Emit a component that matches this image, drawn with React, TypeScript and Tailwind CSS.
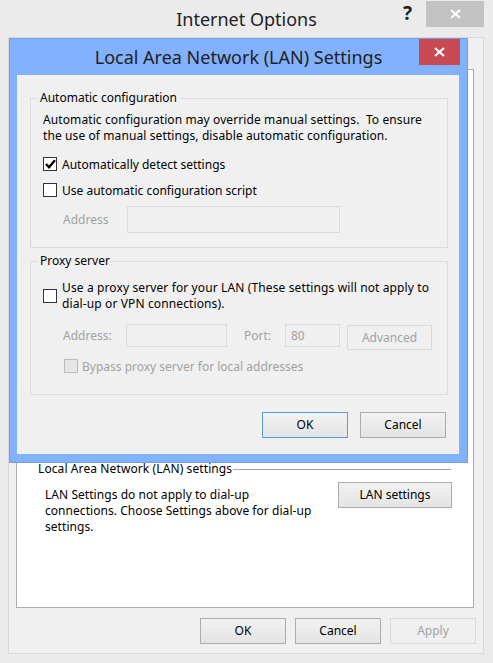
import type { ReactNode } from 'react'

const FONT = "font-['Segoe_UI','Noto_Sans',sans-serif]"

function CheckBox({ checked = false, disabled = false }: { checked?: boolean; disabled?: boolean }) {
  return (
    <div
      className={`-mt-[2px] flex h-[14px] w-[14px] shrink-0 items-center justify-center border ${
        disabled ? 'border-[#bcbcbc] bg-[#e6e6e6]' : 'border-[#333333] bg-white'
      }`}
    >
      {checked && (
        <svg width="11" height="10" viewBox="0 0 11 10">
          <path d="M1 5 L4 8.2 L10 1.2" fill="none" stroke="#000" strokeWidth="2.4" />
        </svg>
      )}
    </div>
  )
}

function Button({
  children,
  width,
  disabled = false,
  primary = false
}: {
  children: ReactNode
  width: string
  disabled?: boolean
  primary?: boolean
}) {
  const border = primary ? 'border-[#5b9be6]' : disabled ? 'border-[#d9d9d9]' : 'border-[#acacac]'
  const bg = disabled ? 'bg-[#f0f0f0]' : 'bg-gradient-to-b from-[#f2f2f2] to-[#e4e4e4]'
  return (
    <div
      className={`flex h-[26px] items-center justify-center border ${border} ${bg} ${width} ${
        disabled ? 'text-[#a2a2a2]' : 'text-black'
      }`}
    >
      {children}
    </div>
  )
}

function GroupBox({ label, children, className }: { label: string; children: ReactNode; className: string }) {
  return (
    <div className={`relative border border-[#dcdcdc] ${className}`}>
      <span className="absolute -top-[9px] left-[7px] bg-[#f0f0f0] px-[2px] leading-[16px]">{label}</span>
      {children}
    </div>
  )
}

function LanDialog() {
  return (
    <div className="absolute left-[9px] top-[38px] flex h-[425px] w-[459px] flex-col border border-[#6f9de6] bg-[#82b1fd]">
      <div className="relative flex h-[36px] items-center justify-center text-[18px] text-[#222222]">
        Local Area Network (LAN) Settings
        <div className="absolute right-[7px] top-0 flex h-[26px] w-[41px] items-center justify-center bg-[#c74a52]">
          <svg width="11" height="10" viewBox="0 0 11 10">
            <path d="M1 1 L10 9 M10 1 L1 9" stroke="#fff" strokeWidth="2" />
          </svg>
        </div>
      </div>

      <div className="ml-[7px] flex h-[379px] w-[442px] flex-col bg-[#f0f0f0] text-[12px] leading-[16px]">
        <GroupBox label="Automatic configuration" className="ml-[13px] mt-[23px] h-[150px] w-[418px] pl-[12px] pt-[13px]">
          <p className="leading-[16px] tracking-[0.1px]">Automatic configuration may override manual settings.&nbsp; To ensure</p>
          <p className="leading-[16px] tracking-[0.1px]">the use of manual settings, disable automatic configuration.</p>
          <div className="mt-[13px] flex h-[16px] items-center gap-[5px]">
            <CheckBox checked />
            <span>Automatically detect settings</span>
          </div>
          <div className="mt-[10px] flex h-[16px] items-center gap-[5px]">
            <CheckBox />
            <span>Use automatic configuration script</span>
          </div>
          <div className="mt-[7px] flex items-center">
            <span className="ml-[20px] w-[64px] text-[#a2a2a2]">Address</span>
            <div className="h-[27px] w-[213px] border border-[#dadada] bg-[#f0f0f0]" />
          </div>
        </GroupBox>

        <GroupBox label="Proxy server" className="ml-[13px] mt-[13px] h-[134px] w-[418px] pl-[12px] pt-[18px]">
          <div className="flex items-center gap-[5px]">
            <div className="mt-[2px]">
              <CheckBox />
            </div>
            <div className="tracking-[0.12px]">
              <p className="leading-[16px]">Use a proxy server for your LAN (These settings will not apply to</p>
              <p className="leading-[16px]">dial-up or VPN connections).</p>
            </div>
          </div>
          <div className="mt-[12px] flex items-start">
            <span className="ml-[20px] mt-[4px] w-[63px] text-[#a2a2a2]">Address:</span>
            <div className="h-[23px] w-[101px] border border-[#dadada] bg-[#f0f0f0]" />
            <span className="ml-[17px] mt-[4px] w-[41px] text-[#a2a2a2]">Port:</span>
            <div className="flex h-[23px] w-[55px] items-center border border-[#dadada] bg-[#f0f0f0] pl-[5px] text-[#a2a2a2]">
              80
            </div>
            <div className="ml-[7px] mt-[1px] flex h-[25px] w-[85px] items-center justify-center border border-[#d9d9d9] text-[#a2a2a2]">
              Advanced
            </div>
          </div>
          <div className="ml-[21px] mt-[9px] flex h-[16px] items-center gap-[4px] text-[#a2a2a2]">
            <CheckBox disabled />
            <span>Bypass proxy server for local addresses</span>
          </div>
        </GroupBox>

        <div className="mr-[13px] mt-[17px] flex justify-end gap-[12px]">
          <Button width="w-[86px]" primary>
            OK
          </Button>
          <Button width="w-[86px]">Cancel</Button>
        </div>
      </div>
    </div>
  )
}

export default function App() {
  return (
    <div className={`relative h-[663px] w-[493px] overflow-hidden bg-[#ebebeb] ${FONT} text-[12px] leading-[16px] text-black`}>
      {/* Internet Options (behind) */}
      <div className="relative flex h-[37px] items-center justify-center text-[18px] text-[#222222]">
        Internet Options
        <span className="absolute left-[403px] top-[2px] text-[19px] font-bold leading-[22px] text-[#222]">?</span>
        <div className="absolute left-[426px] top-[1px] flex h-[26px] w-[58px] items-center justify-center bg-[#c2c2c2]">
          <svg width="11" height="10" viewBox="0 0 11 10">
            <path d="M1 1 L10 9 M10 1 L1 9" stroke="#fff" strokeWidth="2" />
          </svg>
        </div>
      </div>

      <div className="ml-[8px] flex h-[617px] w-[476px] flex-col border border-[#d9d9d9] bg-[#f0f0f0]">
        <div className="ml-[7px] mt-[31px] flex h-[539px] w-[458px] flex-col border border-[#acacac] bg-white">
          <div className="mt-[391px] flex items-center pl-[21px] pr-[22px]">
            <span className="tracking-[0.1px]">Local Area Network (LAN) settings</span>
            <div className="ml-[1px] h-px flex-1 bg-[#a6a6a6]" />
          </div>
          <div className="mt-[5px] flex pl-[28px]">
            <div className="mt-[5px] w-[280px] tracking-[0.05px]">
              <p className="leading-[16px]">LAN Settings do not apply to dial-up</p>
              <p className="leading-[16px]">connections. Choose Settings above for dial-up</p>
              <p className="leading-[16px]">settings.</p>
            </div>
            <div className="ml-[13px]">
              <Button width="w-[114px]">LAN settings</Button>
            </div>
          </div>
        </div>

        <div className="mr-[7px] mt-[10px] flex justify-end gap-[9px]">
          <Button width="w-[86px]">OK</Button>
          <Button width="w-[86px]">Cancel</Button>
          <Button width="w-[86px]" disabled>
            Apply
          </Button>
        </div>
      </div>

      <LanDialog />
    </div>
  )
}
